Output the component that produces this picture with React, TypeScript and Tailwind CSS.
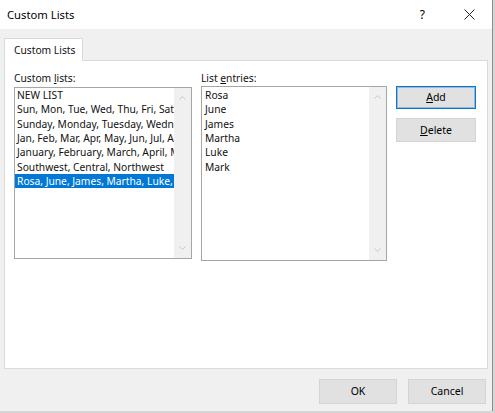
import React from 'react';

const customLists = [
  'NEW LIST',
  'Sun, Mon, Tue, Wed, Thu, Fri, Sat',
  'Sunday, Monday, Tuesday, Wednesday, Thursday, Friday, Saturday',
  'Jan, Feb, Mar, Apr, May, Jun, Jul, Aug, Sep, Oct, Nov, Dec',
  'January, February, March, April, May, June, July, August',
  'Southwest, Central, Northwest',
  'Rosa, June, James, Martha, Luke, Mark',
];

const entries = ['Rosa', 'June', 'James', 'Martha', 'Luke', 'Mark'];

const Chevron: React.FC<{ up?: boolean }> = ({ up }) => (
  <svg width="9" height="6" viewBox="0 0 9 6" className="block">
    <polyline
      points={up ? '1.5,4.5 4.5,1.5 7.5,4.5' : '1.5,1.5 4.5,4.5 7.5,1.5'}
      fill="none"
      stroke="#c8c8c8"
      strokeWidth="1"
    />
  </svg>
);

const ScrollBar: React.FC = () => (
  <div className="w-[17px] h-full bg-[#f0f0f0] flex flex-col items-center justify-between py-[7px] shrink-0">
    <Chevron up />
    <Chevron />
  </div>
);

const Button: React.FC<{ children: React.ReactNode; primary?: boolean; className?: string }> = ({
  children,
  primary,
  className,
}) => (
  <button
    className={
      'bg-[#e1e1e1] text-[10.5px] text-black flex items-center justify-center ' +
      (primary
        ? 'border border-[#0078d7] shadow-[inset_0_0_0_1px_#9fb8cf] '
        : 'border border-[#d4d4d4] ') +
      (className || '')
    }
  >
    {children}
  </button>
);

export default function App() {
  return (
    <div className="w-[495px] h-[413px] bg-[#d6d6d6] overflow-hidden font-['Noto_Sans','Open_Sans',sans-serif] text-[10.25px] text-[#111] leading-[15px]">
      <div className="flex h-[411px]">
        <div className="w-[493px] h-full bg-[#f0f0f0] border-r border-[#8c8c8c] flex flex-col">
          {/* title bar */}
          <div className="h-[29px] bg-white flex items-center pl-[7px] pr-[17px] shrink-0">
            <span className="text-[11.25px] text-black">Custom Lists</span>
            <span className="ml-auto mr-[39px] text-[12px] text-black">?</span>
            <svg width="11" height="11" viewBox="0 0 11 11">
              <path d="M0.5 0.5 L10.5 10.5 M10.5 0.5 L0.5 10.5" stroke="#222" strokeWidth="1" />
            </svg>
          </div>

          {/* tabs + panel */}
          <div className="pt-[8px] px-[4px]">
            <div className="flex">
              <div className="w-[79px] h-[23px] bg-white border border-b-0 border-[#dadada] flex items-center pl-[9px] whitespace-nowrap relative top-[1px] z-10">
                Custom Lists
              </div>
            </div>
            <div className="h-[309px] bg-white border border-[#dadada] pt-[10px] pl-[9px] flex">
              {/* custom lists column */}
              <div className="w-[178px] flex flex-col">
                <div className="h-[15px] mb-[1px]">
                  Custom <span className="underline">l</span>ists:
                </div>
                <div className="h-[172px] border border-[#a6a6a6] flex">
                  <div className="flex-1 min-w-0 overflow-hidden">
                    {customLists.map((item, i) => (
                      <div
                        key={item}
                        className={
                          'whitespace-nowrap pl-[2px] h-[14.33px] leading-[14.33px] ' +
                          (i === customLists.length - 1 ? 'bg-[#0078d7] text-white' : '')
                        }
                      >
                        {item}
                      </div>
                    ))}
                  </div>
                  <ScrollBar />
                </div>
              </div>

              {/* list entries column */}
              <div className="w-[186px] ml-[9px] flex flex-col">
                <div className="h-[15px]">
                  List <span className="underline">e</span>ntries:
                </div>
                <div className="h-[175px] border border-[#a6a6a6] flex">
                  <div className="flex-1 min-w-0 overflow-hidden pt-[1px] pl-[3px]">
                    {entries.map((e) => (
                      <div key={e} className="whitespace-nowrap h-[14.33px] leading-[14.33px]">
                        {e}
                      </div>
                    ))}
                  </div>
                  <ScrollBar />
                </div>
              </div>

              {/* buttons */}
              <div className="w-[80px] ml-[9px] pt-[15px] flex flex-col gap-[9px]">
                <Button primary className="h-[23px]">
                  <span className="underline">A</span>dd
                </Button>
                <Button className="h-[24px]">
                  <span className="underline">D</span>elete
                </Button>
              </div>
            </div>
          </div>

          {/* footer */}
          <div className="flex justify-end gap-[11px] pr-[6px] pt-[10px]">
            <Button className="w-[78px] h-[25px]">OK</Button>
            <Button className="w-[78px] h-[25px]">Cancel</Button>
          </div>
        </div>
      </div>
    </div>
  );
}
